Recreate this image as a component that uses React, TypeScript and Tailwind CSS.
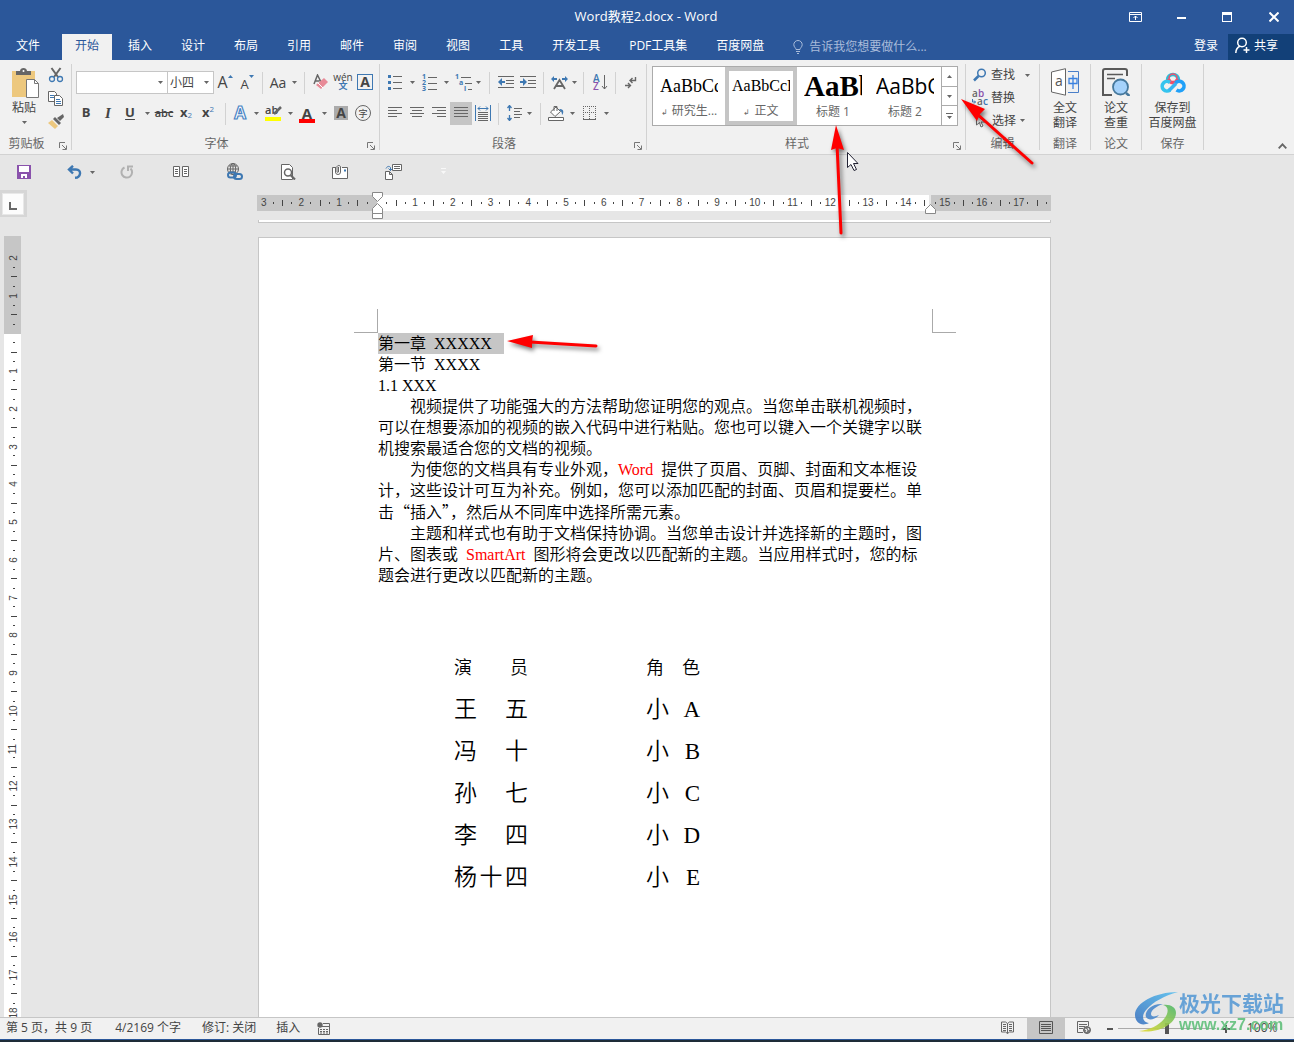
import React from "react";
import clsx from "clsx";

const tabs = [
  "开始",
  "插入",
  "设计",
  "布局",
  "引用",
  "邮件",
  "审阅",
  "视图",
  "工具",
  "开发工具",
  "PDF工具集",
  "百度网盘",
];

const cast = [
  { name: "王五", role: "小A" },
  { name: "冯十", role: "小B" },
  { name: "孙七", role: "小C" },
  { name: "李四", role: "小D" },
  { name: "杨十四", role: "小E" },
];

const galleryStyles = [
  { label: "研究生...", mark: true, preview: "AaBbCcD", look: "font-['Liberation_Serif',serif] text-[18px]" },
  { label: "正文", mark: true, preview: "AaBbCcDd", look: "font-['Liberation_Serif',serif] text-[16px]", active: true },
  { label: "标题 1", preview: "AaBbC", look: "font-['Liberation_Serif',serif] text-[29px] font-bold" },
  { label: "标题 2", preview: "AaBbCc", look: "font-['Open_Sans','Noto_Sans',sans-serif] text-[21px]" },
];

type Props = { label: string; className?: string; children?: React.ReactNode };

const Tool = ({ label, className, children }: Props) => (
  <button
    aria-label={label}
    title={label}
    className={clsx("flex h-[23px] shrink-0 items-center justify-center pb-px", className ?? "w-[22px]")}
  >
    {children}
  </button>
);

const Caret = ({ className = "w-[12px]" }: { className?: string }) => (
  <button aria-label="更多选项" className={clsx("flex h-[23px] shrink-0 items-center justify-center", className)}>
    <CaretIcon />
  </button>
);

const CaretIcon = () => (
  <svg width="5" height="3" viewBox="0 0 5 3" fill="#666">
    <path d="M0 0h5L2.5 3z" />
  </svg>
);

const Sep = ({ className }: { className?: string }) => (
  <div className={clsx("h-[22px] w-px shrink-0 bg-[#d2d2d2]", className)} />
);

const Group = ({
  label,
  className,
  launcher,
  children,
}: Props & { launcher?: boolean }) => (
  <section className={clsx("relative my-1 flex shrink-0 flex-col border-r border-[#d2d2d2]", className)}>
    <div className="flex-1">{children}</div>
    <div className="text-center leading-3 text-[#666]">{label}</div>
    {launcher && (
      <button aria-label={label + "设置"} className="absolute right-[4px] bottom-0">
        <svg width="8" height="8" viewBox="0 0 8 8" stroke="#777" fill="none">
          <path d="M.5 6V.5H6M3 3l4 4M7.5 3.5v4h-4" />
        </svg>
      </button>
    )}
  </section>
);

/* horizontal strokes, each one is [x, y, length] */
const Lines = ({ rows, size = 14 }: { rows: number[][]; size?: number }) => (
  <svg width={size} height={size} viewBox={`0 0 ${size} ${size}`} fill="#666">
    {rows.map(([x, y, w]) => (
      <rect key={`${x}-${y}`} x={x} y={y} width={w} height="1" />
    ))}
  </svg>
);

const ClipboardGroup = () => (
  <Group label="剪贴板" launcher className="w-[72px] [&>div:nth-child(2)]:pr-[18px]">
    <div className="flex">
      <button className="ml-[9px] flex w-[30px] flex-col items-center pt-1">
        <svg className="ml-[3px]" width="30" height="31" viewBox="0 0 30 31">
          <rect x="1" y="3" width="23" height="26" fill="#edc87e" />
          <path d="M5 3h4c0-4 7-4 7 0h4v4H5z" fill="#666" />
          <circle cx="12.500" cy="3" r="1" fill="#fff" />
          <path d="M15.500 11.500h8l4 4v14h-12z" fill="#fff" stroke="#777" />
          <path d="M23.500 11.500v4h4" fill="none" stroke="#777" />
        </svg>
        <span className="pt-px leading-4 whitespace-nowrap">粘贴</span>
        <span className="pt-[5px]">
          <CaretIcon />
        </span>
      </button>
      <div className="ml-[7px] flex flex-col">
        <Tool label="剪切" className="w-5 pb-[2px]">
          <svg width="16" height="16" viewBox="0 0 16 16" fill="none">
            <path d="M3.500 1L10 10M12.500 1L6 10" stroke="#666" strokeWidth="2" />
            <circle cx="4" cy="12" r="2.500" stroke="#3e78b2" strokeWidth="1.300" />
            <circle cx="12" cy="12" r="2.500" stroke="#3e78b2" strokeWidth="1.300" />
          </svg>
        </Tool>
        <Tool label="复制" className="w-5">
          <svg width="16" height="15" viewBox="0 0 16 15" fill="#fff" stroke="#666">
            <path d="M.5.500h6l2 2v8h-8z" />
            <path d="M2 4.500h4M2 6.500h4" stroke="#3e78b2" />
            <path d="M6.500 4.500h5l3 3v7h-8z" />
            <path d="M8 8.500h4M8 10.500h5M8 12.500h5" stroke="#3e78b2" />
          </svg>
        </Tool>
        <Tool label="格式刷" className="w-5">
          <svg width="16" height="15" viewBox="0 0 16 15">
            <path d="M15 0l1 3-4 4-3-3z" fill="#666" />
            <path d="M7 3l6 6-2 2-6-6z" fill="#666" />
            <path d="M4 6l6 6-3 3-7-6z" fill="#edc87e" />
          </svg>
        </Tool>
      </div>
    </div>
  </Group>
);

const FontGroup = () => (
  <Group label="字体" launcher className="w-[308px] [&>div:nth-child(2)]:pr-[18px]">
    <div className="flex items-center pt-[7px] pl-[4px]">
      <Combo label="字体名称" value="" className="w-[92px]" />
      <Combo label="字号" value="小四" className="-ml-px w-[47px]" />
      <Tool label="增大字号">
        <span className="text-[16px] leading-none">A</span>
        <svg className="mb-3" width="5" height="3" viewBox="0 0 5 3" fill="#3e78b2"><path d="M0 3h5L2.500 0z" /></svg>
      </Tool>
      <Tool label="减小字号">
        <span className="pt-1 text-[13px] leading-none">A</span>
        <svg className="mb-3" width="5" height="3" viewBox="0 0 5 3" fill="#3e78b2"><path d="M0 0h5L2.500 3z" /></svg>
      </Tool>
      <Sep className="mx-[4px]" />
      <Tool label="更改大小写" className="w-[22px]"><span className="text-[14px]">Aa</span></Tool>
      <Caret className="w-[10px]" />
      <Sep className="mx-[5px]" />
      <Tool label="清除格式">
        <svg width="16" height="16" viewBox="0 0 16 16">
          <path d="M1 10L4.500 1 8 8M2.500 7h4" fill="none" stroke="#666" strokeWidth="1.500" />
          <path d="M11 4l4 4-7 7-5-4z" fill="#e88a97" />
          <path d="M5 9l5 5" stroke="#fff" />
        </svg>
      </Tool>
      <Tool label="拼音指南">
        <span className="flex flex-col items-center">
          <span className="text-[10px] leading-[8px]">wén</span>
          <span className="text-[9px] leading-[10px] font-bold text-[#3e78b2]">文</span>
        </span>
      </Tool>
      <Tool label="字符边框">
        <span className="flex size-4 items-center justify-center border border-[#3e78b2] text-[14px] leading-none font-bold">A</span>
      </Tool>
    </div>
    <div className="flex items-center pt-2 pl-[3px]">
      <Tool label="加粗"><b className="text-[13px]">B</b></Tool>
      <Tool label="倾斜"><i className="font-['Liberation_Serif',serif] text-[15px] font-bold">I</i></Tool>
      <Tool label="下划线"><span className="text-[13px] font-bold underline underline-offset-2">U</span></Tool>
      <Caret />
      <Tool label="删除线"><span className="text-[11px] font-semibold line-through">abc</span></Tool>
      <Tool label="下标"><b className="text-[13px]">x</b><sub className="text-[8px] text-[#3e78b2]">2</sub></Tool>
      <Tool label="上标"><b className="text-[13px]">x</b><sup className="text-[8px] text-[#3e78b2]">2</sup></Tool>
      <Sep className="mr-[4px] ml-[6px]" />
      <Tool label="文本效果" className="w-5">
        <svg className="overflow-visible" width="16" height="18" viewBox="0 0 16 18">
          <text x="8" y="15" textAnchor="middle" fontSize="17" fontWeight="bold" fill="#fff" stroke="#4a84c4" strokeWidth="1.200">A</text>
        </svg>
      </Tool>
      <Caret />
      <Tool label="突出显示">
        <span className="relative flex h-4 w-4 items-start border-b-4 border-[#ff0] text-[11px] leading-[9px] font-semibold">
          ab
          <svg className="absolute top-px left-1" width="13" height="11" viewBox="0 0 13 11" stroke="#666" strokeWidth="2.500">
            <path d="M12 1L5 8" />
          </svg>
        </span>
      </Tool>
      <Caret />
      <Tool label="字体颜色">
        <span className="mt-1 flex h-4 w-4 items-center justify-center border-b-4 border-[#f00] text-[15px] leading-[12px] font-bold">A</span>
      </Tool>
      <Caret />
      <Tool label="字符底纹">
        <span className="flex h-[14px] w-[14px] items-center justify-center bg-[#ababab] text-[14px] leading-none font-bold">A</span>
      </Tool>
      <Tool label="带圈字符">
        <span className="flex size-4 items-center justify-center rounded-full border border-[#666] text-[9px] leading-none">字</span>
      </Tool>
    </div>
  </Group>
);

const Combo = ({ label, value, className }: { label: string; value: string; className: string }) => (
  <div className={clsx("relative h-[23px] shrink-0", className)}>
    <select
      aria-label={label}
      defaultValue={value}
      className="size-full appearance-none border border-[#c6c6c6] bg-white pl-[2px] text-[12px] text-[#444]"
    >
      <option>{value}</option>
    </select>
    <span className="pointer-events-none absolute top-[10px] right-[5px]">
      <svg width="5" height="3" viewBox="0 0 5 3" fill="#666"><path d="M0 0h5L2.500 3z" /></svg>
    </span>
  </div>
);

const ParagraphGroup = () => (
  <Group label="段落" launcher className="w-[267px] [&>div:nth-child(2)]:pr-[18px]">
    <div className="flex items-center pt-[7px] pl-[4px]">
      <Tool label="项目符号">
        <svg width="14" height="16" viewBox="0 0 14 16">
          <path d="M5 2.500h9M5 8.500h9M5 14.500h9" stroke="#666" />
          <path d="M0 1h3v3H0zM0 7h3v3H0zM0 13h3v3H0z" fill="#3e78b2" />
        </svg>
      </Tool>
      <Caret />
      <Tool label="编号">
        <svg className="overflow-visible" width="15" height="17" viewBox="0 0 15 17">
          <path d="M6 3.500h9M6 9.500h9M6 15.500h9" stroke="#666" />
          <g fontSize="7" fontWeight="bold" fill="#3e78b2">
            <text x="0" y="5">1</text><text x="0" y="11">2</text><text x="0" y="17">3</text>
          </g>
        </svg>
      </Tool>
      <Caret />
      <Tool label="多级列表">
        <svg className="overflow-visible" width="17" height="17" viewBox="0 0 17 17">
          <path d="M6 3.500h10M10 9.500h7M13 15.500h4" stroke="#666" />
          <g fontSize="7" fontWeight="bold" fill="#3e78b2">
            <text x="0" y="5">1</text><text x="4" y="11">a</text><text x="9" y="17">i</text>
          </g>
        </svg>
      </Tool>
      <Caret className="w-[8px]" />
      <Sep className="mr-[5px] ml-[7px]" />
      <Tool label="减少缩进量">
        <svg width="16" height="13" viewBox="0 0 16 13">
          <path d="M0 .5h16M8 4.500h8M8 7.500h8M0 11.500h16" stroke="#666" />
          <path d="M0 6l4-4v3h3v2H4v3z" fill="#3e78b2" />
        </svg>
      </Tool>
      <Tool label="增加缩进量">
        <svg width="16" height="13" viewBox="0 0 16 13">
          <path d="M0 .5h16M8 4.500h8M8 7.500h8M0 11.500h16" stroke="#666" />
          <path d="M7 6L3 2v3H0v2h3v3z" fill="#3e78b2" />
        </svg>
      </Tool>
      <Sep className="mx-[4px]" />
      <Tool label="中文版式">
        <svg width="17" height="15" viewBox="0 0 17 15" fill="none">
          <path d="M3 14l5.500-9L14 14M5 11h7" stroke="#666" strokeWidth="1.800" />
          <path d="M0 4l3-3v2h3v2H3v2zM17 4l-3-3v2h-3v2h3v2z" fill="#3e78b2" />
        </svg>
      </Tool>
      <Caret className="w-[8px]" />
      <Sep className="mx-[5px]" />
      <Tool label="排序">
        <svg className="overflow-visible" width="15" height="17" viewBox="0 0 15 17">
          <text x="0" y="8" fontSize="10" fontWeight="600" fill="#3e78b2">A</text>
          <text x="0" y="16" fontSize="10" fontWeight="600" fill="#8a52ac">Z</text>
          <path d="M11.500 1v14M9 12l2.500 3L14 12" fill="none" stroke="#666" />
        </svg>
      </Tool>
      <Sep className="mx-[4px]" />
      <Tool label="显示编辑标记">
        <svg width="12" height="13" viewBox="0 0 12 13" fill="none" stroke="#666">
          <path d="M10.500 1v3.500H5M7.500 2L5 4.500 7.500 7M0 9.500h5M3 7l2.500 2.500L3 12" strokeWidth="1.400" />
        </svg>
      </Tool>
    </div>
    <div className="flex items-center pt-2 pl-[4px]">
      <Tool label="左对齐"><Lines rows={[[0, 1, 14], [0, 4, 9], [0, 7, 14], [0, 10, 9]]} /></Tool>
      <Tool label="居中"><Lines rows={[[0, 1, 14], [2, 4, 10], [0, 7, 14], [2, 10, 10]]} /></Tool>
      <Tool label="右对齐"><Lines rows={[[0, 1, 14], [5, 4, 9], [0, 7, 14], [5, 10, 9]]} /></Tool>
      <Tool label="两端对齐" className="w-[22px] bg-[#c5c5c5]"><Lines rows={[[0, 1, 14], [0, 4, 14], [0, 7, 14], [0, 10, 14]]} /></Tool>
      <Tool label="分散对齐">
        <svg width="16" height="16" viewBox="0 0 16 16" stroke="#666">
          <path d="M.5 0v16M15.500 0v16M3 3.500h10M5 1.500L3 3.500l2 2M11 1.500l2 2-2 2" stroke="#3e78b2" fill="none" />
          <path d="M3 7.500h10M3 9.500h10M3 11.500h10M3 13.500h10M3 15.500h10" />
        </svg>
      </Tool>
      <Sep className="mx-[4px]" />
      <Tool label="行距">
        <svg width="15" height="16" viewBox="0 0 15 16" fill="none">
          <path d="M2.500 1v5M2.500 10v5M.5 3l2-2.500 2 2.500M.5 13l2 2.500 2-2.500" stroke="#3e78b2" strokeWidth="1.300" />
          <path d="M7 3.500h8M7 6.500h6M7 9.500h8M7 12.500h6" stroke="#666" />
        </svg>
      </Tool>
      <Caret className="w-[8px]" />
      <Sep className="mr-[4px] ml-[7px]" />
      <Tool label="底纹">
        <svg width="17" height="16" viewBox="0 0 17 16" fill="#fff" stroke="#666">
          <path d="M2.500 7L8 2l4.500 4.500L7 11.500z" />
          <path d="M6 6V1.500h3V6" fill="none" />
          <path d="M12 4c4 0 4 4 2 6 0-3-1-4-3-5z" fill="#3e78b2" stroke="none" />
          <path d="M.5 12.500h15v3H.5z" />
        </svg>
      </Tool>
      <Caret className="w-[11px]" />
      <Tool label="边框">
        <svg width="13" height="14" viewBox="0 0 13 14" stroke="#666" fill="none">
          <path d="M.5 0v13M12.500 0v13M6.500 0v13M0 .5h13M0 6.500h13" strokeDasharray="1 1" />
          <path d="M0 13.500h13" />
        </svg>
      </Tool>
      <Caret />
    </div>
  </Group>
);

const StylesGroup = () => (
  <Group label="样式" launcher className="w-[319px] [&>div:nth-child(2)]:pr-[18px]">
    <div className="mx-[5px] mt-[2px] flex h-[60px] w-[306px] border border-[#ababab] bg-white">
      {galleryStyles.map((s) => (
        <button
          key={s.label}
          className={clsx(
            "flex h-full w-[72px] flex-col border-4 px-[3px]",
            s.active ? "border-[#c5c5c5]" : "border-white",
          )}
        >
          <span className={clsx("flex h-[31px] w-full items-center overflow-hidden whitespace-nowrap text-black", s.look)}>
            {s.preview}
          </span>
          <span className="w-full text-center leading-[19px] whitespace-nowrap text-[#666]">
            {s.mark && <span className="mr-1 text-[8px]">↲</span>}
            {s.label}
          </span>
        </button>
      ))}
      <div className="flex flex-1 flex-col divide-y divide-[#ababab] border-l border-[#ababab]">
        <button aria-label="向上" className="flex flex-1 items-center justify-center">
          <svg width="5" height="3" viewBox="0 0 5 3" fill="#666"><path d="M0 3h5L2.500 0z" /></svg>
        </button>
        <button aria-label="向下" className="flex flex-1 items-center justify-center">
          <CaretIcon />
        </button>
        <button aria-label="其他" className="flex flex-1 items-center justify-center">
          <svg width="7" height="6" viewBox="0 0 7 6" fill="#666"><path d="M0 0h7v1H0zM1 3h5L3.500 6z" /></svg>
        </button>
      </div>
    </div>
  </Group>
);

const EditGroup = () => (
  <Group label="编辑" className="w-[74px]">
    <div className="flex flex-col">
      <div className="flex h-[22px] items-center pl-[7px]">
        <button className="flex items-center gap-1">
          <svg width="14" height="14" viewBox="0 0 14 14" fill="none" stroke="#3e78b2">
            <circle cx="8.500" cy="5" r="3.800" strokeWidth="1.500" />
            <path d="M5.500 8L1 12.500" strokeWidth="2.500" />
          </svg>
          查找
        </button>
        <Caret className="ml-[7px] w-[10px]" />
      </div>
      <button className="flex h-[23px] items-center gap-[3px] pl-[6px]">
        <svg className="overflow-visible" width="16" height="16" viewBox="0 0 16 16" fontSize="10" fontWeight="600">
          <text x="0" y="7" fill="#666">a</text>
          <text x="6" y="7" fill="#8a52ac">b</text>
          <text x="5" y="15" fill="#666">a</text>
          <text x="11" y="15" fill="#3e78b2">c</text>
          <path d="M.5 9v3h3M2 10.500L3.500 12 2 13.500" stroke="#3e78b2" fill="none" />
        </svg>
        替换
      </button>
      <div className="flex items-center pl-[9px]">
        <button className="flex items-center gap-[5px]">
          <svg width="12" height="14" viewBox="0 0 12 14" fill="#fff" stroke="#666">
            <path d="M1.500 1v10l3-2.500L6 13l2-1-2-4h4z" />
          </svg>
          选择
        </button>
        <Caret />
      </div>
    </div>
  </Group>
);

const BigGroup = ({ label, className, lines, children }: Props & { lines: string[] }) => (
  <Group label={label} className={className}>
    <button className="flex w-full flex-col items-center pt-1">
      {children}
      <span className="pt-1 leading-[15px] whitespace-nowrap">
        {lines[0]}
        <br />
        {lines[1]}
      </span>
    </button>
  </Group>
);

const Ribbon = () => (
  <div className="relative flex h-[95px] shrink-0 border-b border-[#d2d2d2] bg-[#f1f1f1] text-[#444]">
    <ClipboardGroup />
    <FontGroup />
    <ParagraphGroup />
    <StylesGroup />
    <EditGroup />
    <BigGroup label="翻译" lines={["全文", "翻译"]} className="w-[51px]">
      <svg width="28" height="28" viewBox="0 0 28 28" fill="none">
        <path d="M.5 4L14.500.700v26.500L.5 24z" fill="#fff" stroke="#666" />
        <text x="4" y="18" fontSize="14" fill="#555">a</text>
        <path d="M17 3.500h10.500v21H17" stroke="#4a7fc8" />
        <path d="M18 10.500h8v5h-8zM22 7v14" stroke="#3b82e0" strokeWidth="1.300" />
      </svg>
    </BigGroup>
    <BigGroup label="论文" lines={["论文", "查重"]} className="w-[51px]">
      <svg width="28" height="28" viewBox="0 0 28 28" fill="none">
        <path d="M25 8V3q0-2-2-2H3Q1 1 1 3v24h9" stroke="#595959" strokeWidth="2" />
        <path d="M5 6.500h16M5 10.500h8" stroke="#595959" strokeWidth="1.500" />
        <circle cx="18.500" cy="19" r="7.500" fill="#a5d2fb" stroke="#46789c" strokeWidth="1.800" />
        <path d="M24 25l3.500 3" stroke="#46789c" strokeWidth="2.500" />
      </svg>
    </BigGroup>
    <BigGroup label="保存" lines={["保存到", "百度网盘"]} className="w-[62px]">
      <svg width="28" height="28" viewBox="0 0 28 28" fill="none" strokeWidth="3.600">
        <path d="M8.500 12a5.500 5.500 0 1 1 11 0" stroke="#2cbcd8" />
        <path d="M9.500 11a4.600 4.600 0 0 0 9 0" stroke="#f0506c" />
        <circle cx="14" cy="10" r="4" stroke="#f0506c" strokeWidth="1.500" />
        <path d="M11 22a4.800 4.800 0 1 1 0-7.500" stroke="#35c4ee" />
        <path d="M10 22.500l7-7" stroke="#35b4f4" />
        <path d="M16.500 15a4.800 4.800 0 1 1 1 7" stroke="#20a0f8" />
      </svg>
    </BigGroup>
    <button aria-label="折叠功能区" className="mt-auto mr-[7px] mb-[5px] ml-auto">
      <svg width="9" height="6" viewBox="0 0 9 6" fill="none" stroke="#666" strokeWidth="1.800">
        <path d="M.7 5.300l3.800-4 3.800 4" />
      </svg>
    </button>
  </div>
);

const QuickBar = () => (
  <div className="flex h-[34px] shrink-0 items-center pl-[13px]">
    <Tool label="保存">
      <svg width="14" height="14" viewBox="0 0 14 14">
        <path d="M0 0h14v14H0z" fill="#8a52ac" />
        <path d="M2 1h10v6H2zM4 9h6v4H8v-2H6v2H4z" fill="#fff" />
      </svg>
    </Tool>
    <Tool label="撤消" className="ml-[28px] w-[22px]">
      <svg width="15" height="14" viewBox="0 0 15 14" fill="none" stroke="#3e78b2" strokeWidth="2.400">
        <path d="M6 .8L2 4.500l4 4M2 4.500h7c6 0 5 8-1 8.300" />
      </svg>
    </Tool>
    <Caret className="ml-px w-[12px]" />
    <Tool label="恢复" className="ml-[18px] w-[22px]">
      <svg width="14" height="14" viewBox="0 0 14 14" fill="none" stroke="#b1b1b1" strokeWidth="2">
        <path d="M4.500 2.500a5.300 5.300 0 1 0 6 1M8 6V1.500h5" />
      </svg>
    </Tool>
    <Tool label="双页" className="ml-8 w-[22px]">
      <svg width="17" height="12" viewBox="0 0 17 12" fill="#fff" stroke="#666">
        <path d="M.5.500h6v10h-6zM9.500.500h6v10h-6zM2 3.500h3M2 5.500h3M2 7.500h3M11 3.500h3M11 5.500h3M11 7.500h3" />
      </svg>
    </Tool>
    <Tool label="超链接" className="ml-[31px] w-[22px]">
      <svg width="17" height="17" viewBox="0 0 17 17" fill="none" stroke="#666">
        <circle cx="7" cy="6" r="5.500" />
        <path d="M1.500 6h11M7 .5v10M3 3h8M3 9h7" />
        <ellipse cx="7" cy="6" rx="2.700" ry="5.500" />
        <rect x="2" y="9.500" width="8" height="5" rx="2.500" stroke="#3e78b2" strokeWidth="2" />
        <rect x="8" y="11" width="8" height="5" rx="2.500" stroke="#3e78b2" strokeWidth="2" />
      </svg>
    </Tool>
    <Tool label="打印预览" className="ml-8 w-[22px]">
      <svg width="15" height="16" viewBox="0 0 15 16" fill="#fff" stroke="#666">
        <path d="M.5.500h8l3 3v12H.5z" />
        <circle cx="7" cy="8.500" r="3.500" strokeWidth="1.500" />
        <path d="M9.500 11l4.500 4.500" strokeWidth="2.200" />
      </svg>
    </Tool>
    <Tool label="附件" className="ml-[30px] w-[22px]">
      <svg width="16" height="15" viewBox="0 0 16 15" fill="none" stroke="#666">
        <path d="M3 3.500H.5v11h15v-11H10" fill="#fff" />
        <path d="M3.500 3v5a2.500 2.500 0 0 0 5 0V2.500a2 2 0 0 0-3.500 0V8a1 1 0 0 0 1.500 0V3" />
        <path d="M12 6.500h2" stroke="#3e78b2" strokeWidth="2" />
      </svg>
    </Tool>
    <Tool label="插入对象" className="ml-[31px] w-[22px]">
      <svg width="17" height="16" viewBox="0 0 17 16" fill="#fff" stroke="#666">
        <path d="M7.500.500h9v6h-9zM9 2.500h6M9 4.500h6M.5 7.500h4l3 3v5h-7zM4.500 7.500v3h3" />
        <path d="M1 4.500c1-2 3-3 4.500-1v3M3.500 4.500l2 2 2-2" stroke="#3e78b2" fill="none" />
      </svg>
    </Tool>
    <Tool label="自定义快速访问工具栏" className="ml-[28px] w-[22px]">
      <svg width="5" height="7" viewBox="0 0 5 7" fill="#f8f8f8"><path d="M0 0h5v1H0zM0 3h5L2.500 6z" /></svg>
    </Tool>
  </div>
);

/* a ruler mark every quarter of a centimetre, counted from the margin */
const Mark = ({ step, vertical }: { step: number; vertical?: boolean }) => {
  const n = Math.abs(step);
  const half = n % 2 === 0;
  return (
    <span className="flex min-h-0 min-w-0 flex-1 items-center justify-center">
      {n % 4 === 0 ? (
        <span className={clsx("leading-none whitespace-nowrap", vertical && "-rotate-90")}>{n / 4}</span>
      ) : vertical ? (
        <span className={clsx("h-px shrink-0 bg-[#444]", half ? "w-[6px]" : "w-[2px]")} />
      ) : (
        <span className={clsx("w-px shrink-0 bg-[#444]", half ? "h-[6px]" : "h-[2px]")} />
      )}
    </span>
  );
};

const range = (from: number, to: number) => Array.from({ length: to - from + 1 }, (_, i) => from + i);

const HorizontalRuler = () => (
  <div className="relative -ml-px flex h-4 shrink-0 font-['Liberation_Sans',sans-serif] text-[10px] text-[#444]">
    <div className="flex w-[120px] bg-[#c6c6c6] pr-[5px] pl-[2px]">
      {range(-12, -1).map((s) => <Mark key={s} step={s} />)}
    </div>
    <div className="flex flex-1 bg-white pl-[5px]">
      {range(1, 58).map((s) => <Mark key={s} step={s} />)}
    </div>
    <div className="flex w-[122px] border-l-2 border-[#e6e6e6] bg-[#c6c6c6]">
      {range(59, 71).map((s) => <Mark key={s} step={s} />)}
    </div>
    <svg className="absolute -top-[3px] left-[115px]" width="11" height="28" viewBox="0 0 11 28" fill="#fff" stroke="#888">
      <path d="M.5.500h10v4l-5 5-5-5zM.5 21.500v-5l5-5 5 5v5zM.5 21.500h10v5H.5z" />
    </svg>
    <svg className="absolute top-[9px] right-[115px]" width="11" height="11" viewBox="0 0 11 11" fill="#fff" stroke="#888">
      <path d="M.5 9.500v-4l5-5 5 5v4z" />
    </svg>
  </div>
);

const VerticalRuler = () => (
  <div className="flex w-[27px] shrink-0 flex-col">
    <button aria-label="制表符" className="mt-px flex h-[27px] w-[27px] items-center justify-center bg-[#d6d6d6] pr-[2px]">
      <span className="flex size-[22px] items-center justify-center border border-[#e8e8e8] bg-[#fcfcfc] pt-1">
        <span className="size-2 border-b-2 border-l-2 border-[#666]" />
      </span>
    </button>
    <div className="mt-[19px] ml-[4px] flex min-h-0 w-[17px] flex-1 flex-col overflow-hidden pl-px font-['Liberation_Sans',sans-serif] text-[10px] text-[#444]">
      <div className="-ml-px flex h-[98px] flex-col bg-[#c6c6c6] pt-[17px] pb-[5px] pl-[2px]">
        {range(-8, -1).map((s) => <Mark key={s} step={s} vertical />)}
      </div>
      <div className="-ml-px flex min-h-0 flex-1 flex-col bg-white pt-[4px] pl-[2px]">
        {range(1, 72).map((s) => <Mark key={s} step={s} vertical />)}
      </div>
    </div>
  </div>
);

const Spread = ({ text }: { text: string }) => (
  <span className="flex justify-between">
    {[...text].map((c) => <span key={c}>{c}</span>)}
  </span>
);

const Page = () => (
  <article className="flex-1 overflow-hidden border border-b-0 border-[#c6c6c6] bg-white text-black">
    <div className="mt-[71px] flex justify-between pr-[94px] pl-[95px]">
      <span className="size-6 border-r border-b border-[#aaa]" />
      <span className="size-6 border-b border-l border-[#aaa]" />
    </div>
    <div className="mr-[119px] ml-[119px] font-['Liberation_Serif','Noto_Sans_CJK_SC',serif] text-[16px] leading-[21px] font-[350]">
      <h1>
        <mark className="inline-block bg-[#c6c6c6] pr-3 text-black">
          第一章<span className="ml-2">XXXXX</span>
        </mark>
      </h1>
      <h2>第一节<span className="ml-2">XXXX</span></h2>
      <h3>1.1 XXX</h3>
      <p className="indent-8">
        视频提供了功能强大的方法帮助您证明您的观点。当您单击联机视频时，可以在想要添加的视频的嵌入代码中进行粘贴。您也可以键入一个关键字以联机搜索最适合您的文档的视频。
      </p>
      <p className="indent-8">
        为使您的文档具有专业外观，<span className="mr-2 text-[#f00]">Word</span>提供了页眉、页脚、封面和文本框设计，这些设计可互为补充。例如，您可以添加匹配的封面、页眉和提要栏。单击<span className="font-['Noto_Sans_CJK_SC',sans-serif]">“插入”，</span>然后从不同库中选择所需元素。
      </p>
      <p className="indent-8">
        主题和样式也有助于文档保持协调。当您单击设计并选择新的主题时，图片、图表或<span className="mx-2 text-[#f00]">SmartArt</span>图形将会更改以匹配新的主题。当应用样式时，您的标题会进行更改以匹配新的主题。
      </p>
    </div>
    <table className="mt-[62px] ml-[195px] font-['Liberation_Serif','Noto_Sans_CJK_SC',serif] text-[23px] leading-[42px] font-[350]">
      <thead>
        <tr className="text-[18px] leading-[41px]">
          <th className="w-[74px] p-0 font-[350]"><Spread text="演员" /></th>
          <th className="w-[172px] p-0 pl-[118px] font-[350]"><Spread text="角色" /></th>
        </tr>
      </thead>
      <tbody>
        {cast.map((c) => (
          <tr key={c.name}>
            <td className="p-0"><Spread text={c.name} /></td>
            <td className="p-0 pl-[118px]"><Spread text={c.role} /></td>
          </tr>
        ))}
      </tbody>
    </table>
  </article>
);

const StatusBar = () => (
  <footer className="flex h-[22px] shrink-0 items-center border-t border-[#c6c6c6] bg-[#f1f1f1] pr-[17px] pl-[6px] text-[#444]">
    <button className="pb-[2px]">第 5 页，共 9 页</button>
    <button className="ml-[23px] pb-[2px]">4/2169 个字</button>
    <button className="ml-[21px] pb-[2px]">修订: 关闭</button>
    <button className="ml-[20px] pb-[2px]">插入</button>
    <button aria-label="宏" className="ml-[17px]">
      <svg width="13" height="13" viewBox="0 0 13 13" fill="none" stroke="#666">
        <path d="M6 1.500h6.500v11h-11V6M5 4.500h7" />
        <path d="M3 7.500h8M3 9.500h8M3 11h8" strokeDasharray="2 1" />
        <circle cx="3" cy="3" r="2.700" fill="#666" stroke="none" />
      </svg>
    </button>
    <button aria-label="阅读视图" className="ml-auto flex h-full w-[39px] items-center justify-center pb-[2px]">
      <svg width="13" height="13" viewBox="0 0 13 13" fill="none" stroke="#666">
        <path d="M.5 1v10h4l2 1.500 2-1.500h4V1h-4l-2 1.500L4.500 1zM6.500 2.500v10M2 3.500h3M2 5.500h3M2 7.500h3M8 3.500h3M8 5.500h3M8 7.500h3M2 9.500h3M8 9.500h3" />
      </svg>
    </button>
    <button aria-label="页面视图" className="flex h-full w-[38px] items-center justify-center bg-[#c6c6c6] pb-[2px]">
      <svg width="14" height="13" viewBox="0 0 14 13" fill="none" stroke="#555">
        <path d="M.5.500h13v12H.5zM2 3.500h10M2 5.500h10M2 7.500h10M2 9.500h10" />
      </svg>
    </button>
    <button aria-label="Web 版式视图" className="flex h-full w-[38px] items-center justify-center pb-[2px]">
      <svg width="14" height="13" viewBox="0 0 14 13" fill="none" stroke="#666">
        <path d="M6 11.500H.5V.500h11V5M2 3.500h8M2 5.500h6M2 7.500h4" />
        <circle cx="10" cy="9" r="3.500" fill="#777" />
        <path d="M8 8l2 1-1 2M11 7l1 2" stroke="#fff" />
      </svg>
    </button>
    <button aria-label="缩小" className="ml-1 flex h-full w-2 items-center">
      <span className="h-[2px] w-[6px] bg-[#555]" />
    </button>
    <input
      type="range"
      aria-label="显示比例"
      min={0}
      max={100}
      defaultValue={50}
      className="ml-[3px] h-[11px] w-[98px] appearance-none bg-[linear-gradient(#aaa,#aaa)] bg-[length:100%_1px] bg-center bg-no-repeat [&::-webkit-slider-thumb]:h-[11px] [&::-webkit-slider-thumb]:w-1 [&::-webkit-slider-thumb]:appearance-none [&::-webkit-slider-thumb]:bg-[#555]"
    />
    <button aria-label="放大" className="ml-[6px]">
      <svg width="8" height="8" viewBox="0 0 8 8" fill="#555"><path d="M3 0h2v3h3v2H5v3H3V5H0V3h3z" /></svg>
    </button>
    <button className="ml-[17px] w-[30px] pb-[2px] text-right">100%</button>
  </footer>
);

const Watermark = () => (
  <div className="pointer-events-none absolute right-[10px] bottom-[7px] flex items-start opacity-90">
    <svg width="44" height="42" viewBox="0 0 44 42">
      <defs>
        <linearGradient id="swirlBlue" x1="1" y1="0" x2="0" y2="1">
          <stop offset="0" stopColor="#58c0f0" />
          <stop offset="1" stopColor="#3c74c0" />
        </linearGradient>
        <linearGradient id="swirlGreen" x1="1" y1="0" x2="0" y2="1">
          <stop offset="0" stopColor="#4cb86c" />
          <stop offset="1" stopColor="#e8dc30" />
        </linearGradient>
      </defs>
      <path d="M43 1C20 1 0 12 0 24c0 7 6 12 14 8C7 31 6 24 12 18 18 11 29 5 43 1z" fill="url(#swirlBlue)" />
      <path d="M28 13c-12-1-19 8-17 13 2 4 9 3 13-2-4 2-8 2-8-1 0-4 6-8 12-10z" fill="#4a88cc" />
      <path d="M28 14c6 1 6 8 1 14-5 6-14 11-25 12 19 3 37-7 37-18 0-6-6-9-13-8z" fill="url(#swirlGreen)" />
    </svg>
    <div className="flex flex-col">
      <span className="text-[21px] leading-6 font-bold text-[#5a9bd5]">极光下载站</span>
      <span className="font-['Liberation_Sans',sans-serif] text-[16px] leading-5 font-bold text-[#62c07c]">www.xz7.com</span>
    </div>
  </div>
);

const Arrow = ({ className, width, height, head, line }: {
  className: string; width: number; height: number; head: string; line: string;
}) => (
  <svg
    className={clsx("pointer-events-none absolute drop-shadow-[2px_3px_2px_rgba(0,0,0,0.5)]", className)}
    width={width}
    height={height}
    viewBox={`0 0 ${width} ${height}`}
  >
    <path d={line} stroke="#f00" strokeWidth="3" strokeLinecap="round" />
    <path d={head} fill="#f00" />
  </svg>
);

export default function App() {
  return (
    <div className="relative flex h-screen flex-col overflow-hidden bg-[#e6e6e6] font-['Open_Sans','Noto_Sans_CJK_SC',sans-serif] text-[12px]">
      <header className="shrink-0 bg-[#2b579a] text-white">
        <div className="flex h-[34px] items-center">
          <h1 className="flex-1 pl-[180px] text-center text-[13px]">Word教程2.docx - Word</h1>
          <div className="flex">
            <Tool label="功能区显示选项" className="w-[46px]">
              <svg width="13" height="10" viewBox="0 0 13 10" fill="none" stroke="#fff">
                <path d="M.5.500h12v9H.5zM0 2.500h13M6.500 8V4M4.500 6l2-2 2 2" />
              </svg>
            </Tool>
            <Tool label="最小化" className="w-[46px]">
              <span className="mt-[3px] h-[2px] w-[9px] bg-white" />
            </Tool>
            <Tool label="最大化" className="w-[46px]">
              <span className="h-[10px] w-[10px] border border-t-[3px] border-white" />
            </Tool>
            <Tool label="关闭" className="w-[44px] pl-[3px]">
              <svg width="10" height="10" viewBox="0 0 10 10" stroke="#fff" strokeWidth="2"><path d="M.5.500l9 9M9.500.500l-9 9" /></svg>
            </Tool>
          </div>
        </div>
        <nav className="flex h-[26px] items-stretch">
          <button className="w-[62px] pr-[6px] pb-[3px]">文件</button>
          <div className="flex gap-[3px]">
            {tabs.map((t, i) => (
              <button key={t} className={clsx("px-[13px] pb-[3px] whitespace-nowrap", i === 0 && "bg-[#f1f1f1] text-[#2b579a]")}>
                {t}
              </button>
            ))}
          </div>
          <label className="ml-4 flex items-center gap-[6px] text-[#a9bcda]">
            <svg width="10" height="14" viewBox="0 0 10 14" fill="none" stroke="currentColor">
              <path d="M3 9.500C3 8 .8 7 .8 4.700a4.200 4.200 0 0 1 8.400 0C9.200 7 7 8 7 9.500zM3 11.500h4M4 13.500h2" />
            </svg>
            <input
              aria-label="操作说明搜索"
              placeholder="告诉我您想要做什么..."
              className="w-[140px] bg-transparent outline-none placeholder:text-[#a9bcda]"
            />
          </label>
          <button className="mr-[10px] ml-auto pb-[3px]">登录</button>
          <button className="flex w-[66px] items-center gap-1 bg-[#124078] pb-[3px] pl-[7px]">
            <svg width="15" height="17" viewBox="0 0 15 17" fill="none" stroke="#fff" strokeWidth="1.500">
              <circle cx="7" cy="5.500" r="4.300" />
              <path d="M.8 16c0-4 2-6 4.500-7M11.500 10v6M8.500 13h6" />
            </svg>
            共享
          </button>
        </nav>
      </header>
      <Ribbon />
      <QuickBar />
      <div className="flex min-h-0 flex-1">
        <VerticalRuler />
        <main className="flex min-w-0 flex-1 justify-center pt-[6px] pr-[12px]">
          <div className="flex w-[793px] flex-col">
            <HorizontalRuler />
            <div className="mt-[9px] mb-[14px] h-[3px] shrink-0 border-x border-b border-[#c6c6c6] bg-white" />
            <Page />
          </div>
        </main>
      </div>
      <StatusBar />
      <div className="h-[3px] shrink-0 border-t border-[#2b579a] bg-[#1e2c38]" />

      <Arrow className="top-[124px] left-[828px]" width={18} height={114} line="M9 20L13 109" head="M8 1L3 26l6-2 7 2z" />
      <Arrow className="top-[98px] left-[960px]" width={78} height={70} line="M16 15L72 65" head="M1 1l24 10-5 5-3 7z" />
      <Arrow className="top-[332px] left-[506px]" width={96} height={20} line="M24 10L90 14" head="M1 9l26-6-1 7 0 6z" />
      <svg className="pointer-events-none absolute top-[151px] left-[846px]" width="13" height="21" viewBox="0 0 13 21" fill="#fff" stroke="#223">
        <path d="M1.500 1.500v15l3.500-3 3 6 2.500-1-3-6h4.500z" />
      </svg>
      <Watermark />
    </div>
  );
}
